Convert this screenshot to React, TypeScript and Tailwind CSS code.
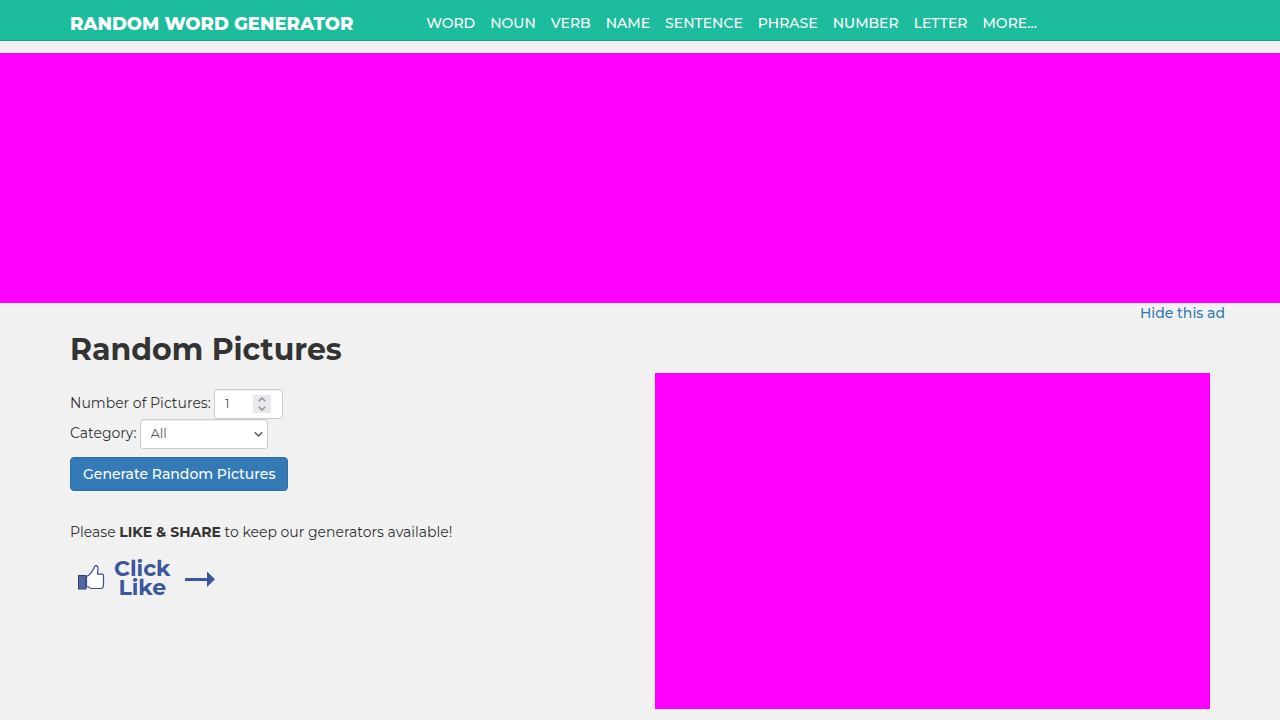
import { useState } from "react";

const links = ["WORD", "NOUN", "VERB", "NAME", "SENTENCE", "PHRASE", "NUMBER", "LETTER", "MORE..."];

function Header() {
  return (
    <header className="border-b border-[#16a085] bg-[#1cbc9c]">
      <div className="mx-auto flex h-10 max-w-[1140px] items-center gap-[73px] pt-1.5 text-white">
        <a href="#home" className="pt-0.5 text-[18px] leading-5 font-extrabold whitespace-nowrap">
          RANDOM WORD GENERATOR
        </a>
        <nav className="flex gap-[15px] font-medium">
          {links.map((link) => (
            <a key={link} href={`#${link.toLowerCase()}`}>
              {link}
            </a>
          ))}
        </nav>
      </div>
    </header>
  );
}

function GeneratorForm() {
  const [count, setCount] = useState(1);
  return (
    <form className="mt-[21px] flex flex-col items-start" onSubmit={(e) => e.preventDefault()}>
      <div className="flex items-center gap-[3px]">
        <label htmlFor="qty" className="pb-0.5">Number of Pictures:</label>
        <div className="relative">
          <input
            id="qty"
            type="number"
            min={1}
            value={count}
            onChange={(e) => setCount(Number(e.target.value))}
            className="block h-[30px] w-[69px] appearance-none rounded-[3px] border border-[#ccc] bg-white px-2.5 pb-0.5 text-[13px] text-[#555] shadow-[inset_0_1px_1px_rgba(0,0,0,0.075)] [appearance:textfield]"
          />
          <div className="absolute top-1.5 right-3 flex h-[18px] w-[18px] flex-col bg-[#e9e9ed]">
            <button type="button" aria-label="Increase" className="flex h-[9px] items-center justify-center" onClick={() => setCount(count + 1)}>
              <svg width="8" height="5" viewBox="0 0 8 5" fill="none" stroke="#8f8f9d" strokeWidth="1.5">
                <path d="M0.7 4.3 4 1l3.3 3.3" />
              </svg>
            </button>
            <button type="button" aria-label="Decrease" className="flex h-[9px] items-center justify-center" onClick={() => setCount(Math.max(1, count - 1))}>
              <svg width="8" height="5" viewBox="0 0 8 5" fill="none" stroke="#8f8f9d" strokeWidth="1.5">
                <path d="M0.7 0.7 4 4l3.3-3.3" />
              </svg>
            </button>
          </div>
        </div>
      </div>
      <div className="flex items-center gap-[3px]">
        <label htmlFor="category" className="pb-0.5">Category:</label>
        <div className="relative">
          <select
            id="category"
            className="block h-[30px] w-32 appearance-none rounded-[3px] border border-[#ccc] bg-white px-2.5 pb-0.5 text-[13px] text-[#555] shadow-[inset_0_1px_1px_rgba(0,0,0,0.075)]"
          >
            <option>All</option>
          </select>
          <svg className="pointer-events-none absolute top-3 right-[5px]" width="9" height="7" viewBox="0 0 9 7" fill="none" stroke="#555" strokeWidth="1.5">
            <path d="M0.8 1.3 4.5 5l3.7-3.7" />
          </svg>
        </div>
      </div>
      <button type="submit" className="mt-2 h-[34px] rounded-[4px] border border-[#2e6da4] bg-[#337ab7] px-3 font-medium text-white">
        Generate Random Pictures
      </button>
    </form>
  );
}

function LikeBanner() {
  return (
    <div className="mt-[17px] flex items-center pl-2 text-[#3b579d]">
      <svg width="27" height="26" viewBox="0 0 27 26" fill="none">
        <rect x="0.5" y="10.5" width="7.5" height="13.5" fill="#5368a0" stroke="#2f3f7e" />
        <path
          d="M8.500 11.500C12 10 14.500 6 16.300 2.200c.4-1.300 1.200-1.700 2.200-1.500 1.400.4 1.600 2.600 1.300 4.400-.1 1.300-.3 2.600-.3 4h4.300c1.500 0 2.100 1.200 1.700 2.400v8.500c0 2-1.200 3.500-3 3.500h-7.500c-2.500 0-3.500-.7-4.500-1.700l-2-.2z"
          fill="#fff"
          stroke="#3b4c8c"
          strokeWidth="1.200"
          strokeLinejoin="round"
        />
      </svg>
      <div className="ml-[9px] text-center text-[22px] leading-[19px] font-bold">
        Click
        <br />
        Like
      </div>
      <svg className="mt-px ml-[14px]" width="30" height="16" viewBox="0 0 30 16" fill="currentColor">
        <path d="M0 7h22V0.500L30 8.300 22 16V10H0z" />
      </svg>
    </div>
  );
}

export default function App() {
  return (
    <div className="min-h-screen bg-[#f1f1f1] font-['Montserrat','Inter',sans-serif] text-[14px] leading-5 text-[#333]">
      <Header />
      <div className="mt-3 h-[250px] bg-[#ff00ff]" />
      <div className="mx-auto flex max-w-[1170px] justify-end">
        <a href="#hide" className="font-medium text-[#337ab7]">
          Hide this ad
        </a>
      </div>
      <main className="mx-auto grid max-w-[1140px] grid-cols-2 gap-[30px]">
        <section>
          <h1 className="mt-[9px] text-[30px] leading-9 font-bold">Random Pictures</h1>
          <GeneratorForm />
          <p className="mt-[31px]">
            Please <strong>LIKE &amp; SHARE</strong> to keep our generators available!
          </p>
          <LikeBanner />
        </section>
        <aside className="pt-[50px]">
          <div className="h-[336px] bg-[#ff00ff]" />
        </aside>
      </main>
    </div>
  );
}
